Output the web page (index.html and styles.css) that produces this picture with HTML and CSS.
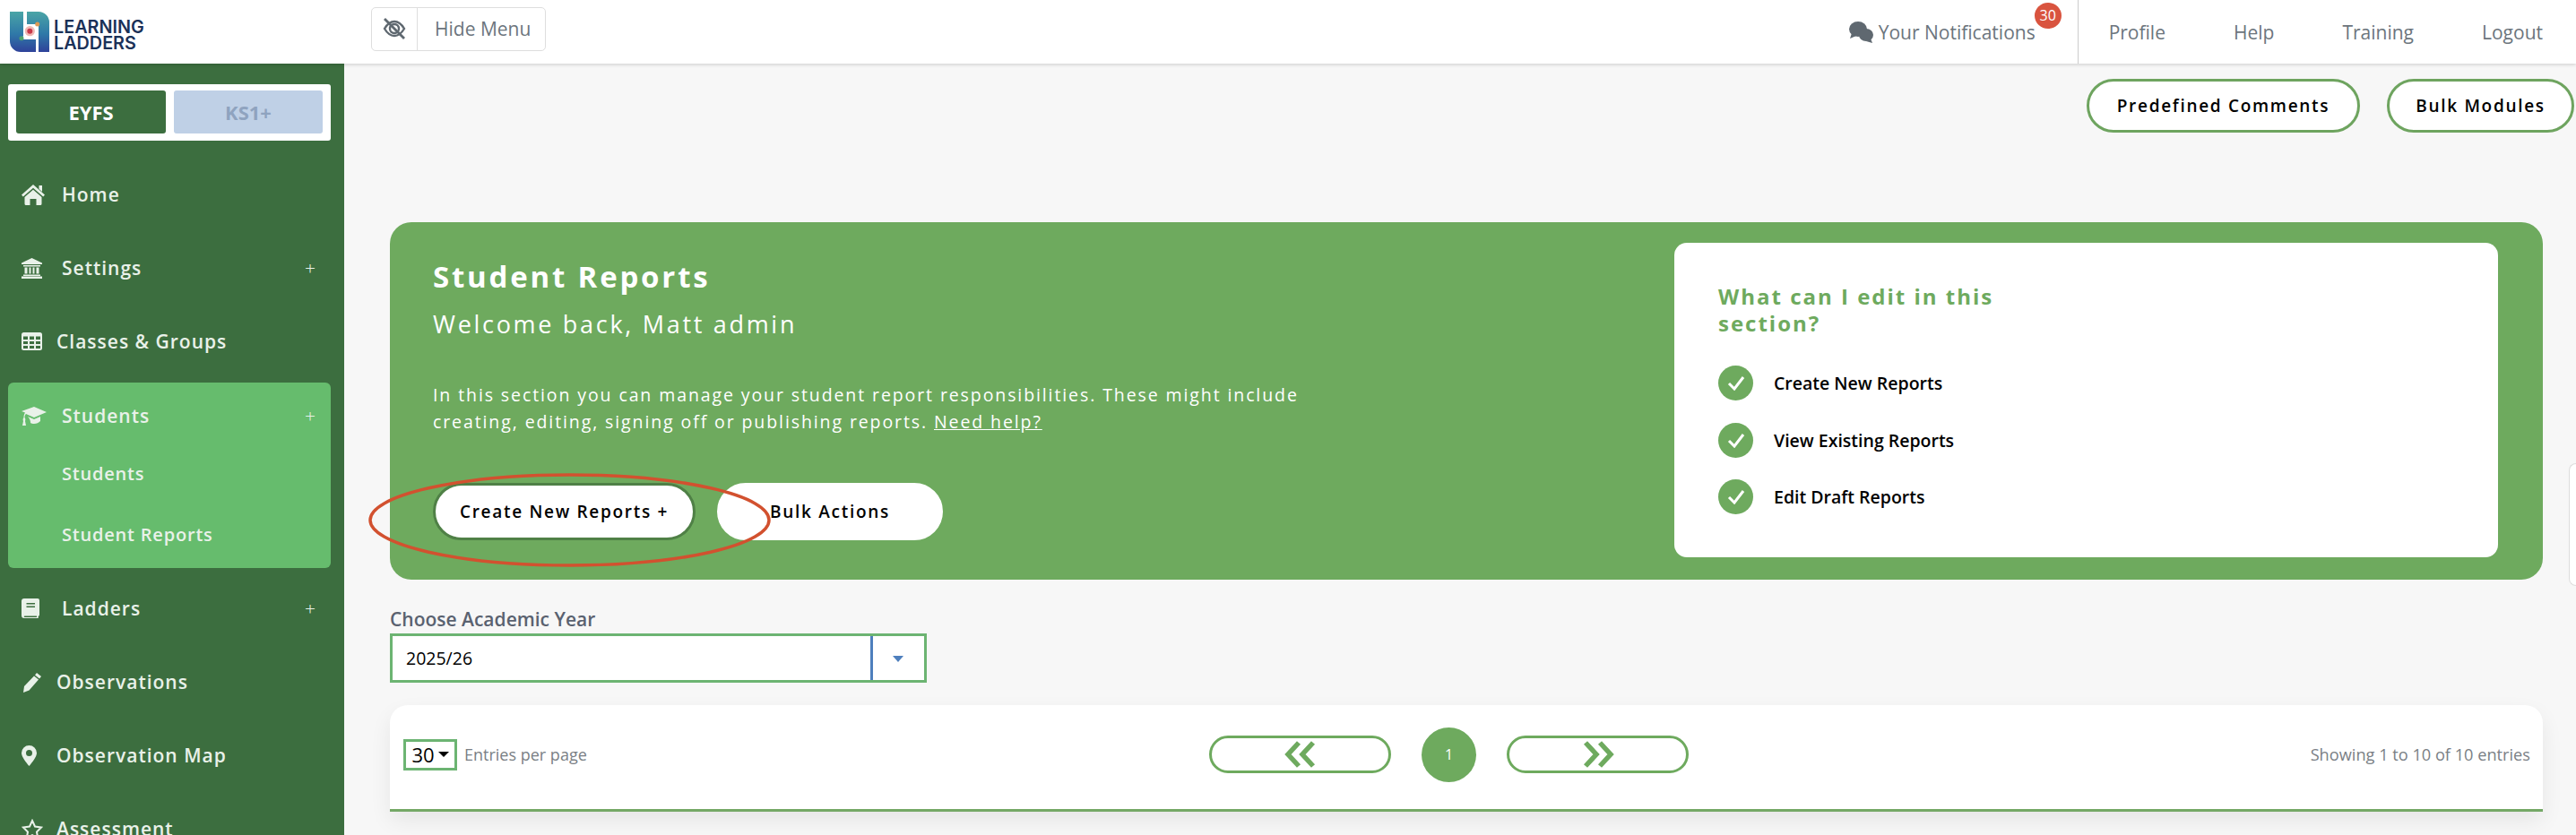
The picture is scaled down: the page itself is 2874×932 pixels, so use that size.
FILE: index.html
```html
<!DOCTYPE html>
<html lang="en">
<head>
  <meta charset="UTF-8">
  <title>Student Reports - Learning Ladders</title>
  <link rel="stylesheet" href="styles.css">
</head>
<body>
  <div class="app">
    <!-- Top bar -->
    <header class="topbar">
      <div class="brand">
        <svg class="brand-mark" viewBox="0 0 44 45">
          <defs>
            <linearGradient id="markGrad" gradientUnits="userSpaceOnUse" x1="0" y1="0" x2="0" y2="45">
              <stop offset="0" stop-color="#4aa5a6"/>
              <stop offset="0.55" stop-color="#2f79a8"/>
              <stop offset="1" stop-color="#2f429a"/>
            </linearGradient>
          </defs>
          <path fill="url(#markGrad)" d="M0 0h15v31h14v14h-17a12 12 0 0 1-12-12z"/>
          <path fill="url(#markGrad)" d="M19 0h13a12 12 0 0 1 12 12v33h-12v-31h-13z"/>
          <path d="M13 30l18-16" stroke="#fff" stroke-width="1.500"/>
          <circle cx="22.300" cy="21.700" r="5.600" fill="#f0b9b5"/>
          <circle cx="22.300" cy="21.700" r="3" fill="#c8384a"/>
          <circle cx="13" cy="29.700" r="2.500" fill="#4da36c"/>
          <circle cx="30.700" cy="14" r="2.500" fill="#dd9a54"/>
        </svg>
        <div class="brand-name">LEARNING<br>LADDERS</div>
      </div>
      <div class="hide-menu">
        <span class="hide-menu-icon">
          <svg viewBox="0 0 26 26" width="26" height="26" fill="none" stroke="#5f6870" stroke-width="2.400">
            <path d="M2 13c3-5 7-8 11-8s8 3 11 8c-3 5-7 8-11 8s-8-3-11-8z"/>
            <circle cx="13" cy="13" r="5"/>
            <path d="M2 2l22 22" stroke-width="2.800"/>
          </svg>
        </span>
        <span class="hide-menu-text">Hide Menu</span>
      </div>
      <div class="notifications">
        <svg class="notifications-icon" viewBox="0 0 27 24" width="27" height="24" fill="#5f6870">
          <ellipse cx="10" cy="8.500" rx="10" ry="8.500"/>
          <path d="M3 13l-2 6 7-3z"/>
          <ellipse cx="19" cy="15" rx="8" ry="7"/>
          <path d="M24 19l2 5-7-2z"/>
        </svg>
        <span>Your Notifications</span>
        <span class="badge">30</span>
      </div>
      <nav class="topnav">
        <a>Profile</a>
        <a>Help</a>
        <a>Training</a>
        <a>Logout</a>
      </nav>
    </header>

    <!-- Sidebar -->
    <aside class="sidebar">
      <div class="stage-switch">
        <div class="stage stage-active">EYFS</div>
        <div class="stage stage-off">KS1+</div>
      </div>
      <div class="nav-link">
        <svg class="nav-icon" viewBox="0 0 26 23" width="26" height="23" fill="currentColor"><path d="M13 0l13 11.500-1.800 2.100-11.200-9.800-11.200 9.800-1.800-2.100z"/><path d="M19.500 1h3.500v7l-3.500-3z"/><path d="M13 5.800l9.500 8.200v7.500a1.500 1.500 0 0 1-1.500 1.500h-4.500v-7h-7v7h-4.500a1.500 1.500 0 0 1-1.500-1.500v-7.500z"/></svg>
        <span>Home</span>
      </div>
      <div class="nav-link">
        <svg class="nav-icon" viewBox="0 0 23 23" width="23" height="23" fill="currentColor"><path d="M11.500 0l11.500 5.500v1.500h-23v-1.500zM2 8h19v1.500h-19zM3.500 10.500h3v7h-3zM8.500 10.500h2v7h-2zM12.500 10.500h2v7h-2zM16.500 10.500h3v7h-3zM2 18.500h19v1.500h-19zM0 20.500h23v2.500h-23z"/></svg>
        <span>Settings</span>
        <span class="nav-plus">+</span>
      </div>
      <div class="nav-link nav-link-tight">
        <svg class="nav-icon" viewBox="0 0 23 20" width="23" height="20" fill="currentColor"><path fill-rule="evenodd" d="M2.500 0h18a2.500 2.500 0 0 1 2.500 2.500v15a2.500 2.500 0 0 1-2.500 2.500h-18a2.500 2.500 0 0 1-2.500-2.500v-15a2.500 2.500 0 0 1 2.500-2.500zM2 4.500v3.500h5v-3.500zM9 4.500v3.500h5v-3.500zM16 4.500v3.500h5v-3.500zM2 10v3h5v-3zM9 10v3h5v-3zM16 10v3h5v-3zM2 15v3h5v-3zM9 15v3h5v-3zM16 15v3h5v-3z"/></svg>
        <span>Classes &amp; Groups</span>
      </div>
      <div class="nav-panel">
        <div class="nav-link nav-link-head">
          <svg class="nav-icon" viewBox="0 0 28 21" width="28" height="21" fill="currentColor"><path d="M14 0l14 6-14 6-9-4c-1 1-1.500 2-1.500 4 1 1 1 3 .5 4l1 5h-4l1-5c-.6-1-.5-3 .5-4 0-2.500.5-4 1.500-5.500l-4-1.500z"/><path d="M7 11l7 3 7-3v5c-2 2-4 3-7 3-1.500 0-3-.3-4-1 0-3-1-5-3-7z"/></svg>
          <span>Students</span>
          <span class="nav-plus">+</span>
        </div>
        <div class="nav-sub">Students</div>
        <div class="nav-sub">Student Reports</div>
      </div>
      <div class="nav-link">
        <svg class="nav-icon" viewBox="0 0 20 23" width="20" height="23" fill="currentColor"><path fill-rule="evenodd" d="M3 0h15a2 2 0 0 1 2 2v16c0 1-.5 1.500-1.200 1.800-.2.700-.2 1.400 0 2.200h-15.800a3 3 0 0 1-3-3v-16a3 3 0 0 1 3-3zM5.500 5v1.500h9.500v-1.500zM5.500 8.500v1.500h9.500v-1.500zM3.500 19.500c-1 0-1 1.500 0 1.500h13.500v-1.500z"/></svg>
        <span>Ladders</span>
        <span class="nav-plus">+</span>
      </div>
      <div class="nav-link nav-link-tight">
        <svg class="nav-icon" viewBox="0 0 23 23" width="23" height="23" fill="currentColor"><path d="M17 1l5 4-2 2.500-5-4zM14 4.500l5 4-10.500 12-6.500 2.500 1-7z"/></svg>
        <span>Observations</span>
      </div>
      <div class="nav-link nav-link-tight">
        <svg class="nav-icon" viewBox="0 0 17 23" width="17" height="23" fill="currentColor"><path fill-rule="evenodd" d="M8.500 0a8.500 8.500 0 0 1 8.500 8.500c0 4-5 10.500-8.500 14.500-3.500-4-8.500-10.500-8.500-14.500a8.500 8.500 0 0 1 8.500-8.500zM8.500 5a3.500 3.500 0 1 0 0 7 3.500 3.500 0 0 0 0-7z"/></svg>
        <span>Observation Map</span>
      </div>
      <div class="nav-link nav-link-tight">
        <svg class="nav-icon" viewBox="0 0 24 23" width="24" height="23" fill="none" stroke="currentColor" stroke-width="2"><path d="M12 2l3 6.500 7 1-5 5 1.200 7-6.200-3.400-6.200 3.400 1.200-7-5-5 7-1z"/></svg>
        <span>Assessment</span>
      </div>
    </aside>

    <!-- Main content -->
    <main class="content">
      <div class="page-actions">
        <button class="pill pill-outline">Predefined Comments</button>
        <button class="pill pill-outline">Bulk Modules</button>
      </div>

      <section class="hero">
        <div class="hero-left">
          <h1>Student Reports</h1>
          <h2>Welcome back, Matt admin</h2>
          <p>In this section you can manage your student report responsibilities. These might include creating, editing, signing off or publishing reports. <u>Need help?</u></p>
          <div class="hero-buttons">
            <button class="pill pill-create">Create New Reports +</button>
            <button class="pill pill-plain">Bulk Actions</button>
          </div>
        </div>
        <div class="hero-card">
          <h3>What can I edit in this section?</h3>
          <ul>
            <li><span class="tick"><svg viewBox="0 0 20 17" width="20" height="17" fill="none" stroke="#fff" stroke-width="3"><path d="M2 9l6 6 10-13"/></svg></span>Create New Reports</li>
            <li><span class="tick"><svg viewBox="0 0 20 17" width="20" height="17" fill="none" stroke="#fff" stroke-width="3"><path d="M2 9l6 6 10-13"/></svg></span>View Existing Reports</li>
            <li><span class="tick"><svg viewBox="0 0 20 17" width="20" height="17" fill="none" stroke="#fff" stroke-width="3"><path d="M2 9l6 6 10-13"/></svg></span>Edit Draft Reports</li>
          </ul>
        </div>
        <!-- red hand-drawn ring over the button -->
        <svg class="ring" viewBox="0 0 449 105" width="449" height="105" fill="none">
          <ellipse cx="224.500" cy="52.500" rx="222.500" ry="50.500" stroke="#d2512f" stroke-width="3.500"/>
        </svg>
      </section>

      <div class="year-filter">
        <label>Choose Academic Year</label>
        <div class="year-select">
          <span class="year-value">2025/26</span>
          <span class="year-arrow"></span>
        </div>
      </div>

      <section class="table-card">
        <div class="entries">
          <span class="entries-select">30<span class="entries-caret"></span></span>
          <span>Entries per page</span>
        </div>
        <div class="pager">
          <span class="pager-btn">
            <svg viewBox="0 0 38 30" width="38" height="30" fill="none" stroke="#6eaa5e" stroke-width="5.500"><path d="M17 2l-12 13 12 13M33 2l-12 13 12 13"/></svg>
          </span>
          <span class="pager-num">1</span>
          <span class="pager-btn">
            <svg viewBox="0 0 38 30" width="38" height="30" fill="none" stroke="#6eaa5e" stroke-width="5.500"><path d="M5 2l12 13-12 13M21 2l12 13-12 13"/></svg>
          </span>
        </div>
        <div class="showing">Showing 1 to 10 of 10 entries</div>
      </section>

      <div class="side-tab"></div>
    </main>
  </div>
</body>
</html>
```

FILE: styles.css
```css
* {
  box-sizing: border-box;
}

body {
  margin: 0;
  height: 932px;
  overflow: hidden;
  font-family: "Open Sans", sans-serif;
  background: #f7f7f7;
}

.app {
  display: grid;
  grid-template-columns: 384px 1fr;
  grid-template-rows: 71px 861px;
}

/* Top bar */
.topbar {
  grid-column: 1 / 3;
  display: flex;
  align-items: center;
  background: #fff;
  box-shadow: 0 1px 4px rgba(0, 0, 0, 0.18);
  position: relative;
  z-index: 2;
  color: #6c757d;
  font-size: 21px;
}

.brand {
  display: flex;
  align-items: center;
  gap: 5px;
  width: 414px;
  padding-left: 11px;
}

.brand-mark {
  width: 44px;
  height: 45px;
}

.brand-name {
  font-family: Inter, sans-serif;
  font-weight: 600;
  font-size: 19.800px;
  line-height: 18px;
  color: #1b3158;
  margin-top: 6px;
}

.hide-menu {
  display: flex;
  height: 49px;
  width: 195px;
  border: 1px solid #dedede;
  border-radius: 5px;
  margin-top: -7px;
}

.hide-menu-icon {
  width: 51px;
  display: flex;
  align-items: center;
  justify-content: center;
  border-right: 1px solid #dedede;
}

.hide-menu-text {
  padding-left: 19px;
  line-height: 47px;
}

.notifications {
  margin-left: auto;
  display: flex;
  align-items: center;
  gap: 6px;
  position: relative;
  padding-right: 47px;
}

.badge {
  position: absolute;
  right: 18px;
  top: -19px;
  width: 30px;
  height: 29px;
  border-radius: 50%;
  background: #d9543f;
  color: #fff;
  font-size: 16px;
  line-height: 29px;
  text-align: center;
}

.topnav {
  display: flex;
  align-items: center;
  gap: 76px;
  height: 71px;
  padding: 0 37px 0 34px;
  border-left: 1px solid #ccc;
}

/* Sidebar */
.sidebar {
  background: #3c6e3f;
  padding: 23px 15px 0 9px;
  overflow: hidden;
  color: #e9f1e9;
  font-size: 21px;
  font-weight: 600;
  letter-spacing: 1px;
}

.stage-switch {
  display: grid;
  grid-template-columns: 167px 166px;
  gap: 9px;
  padding: 7px 9px 8px;
  background: #fff;
  border-radius: 3px;
  margin-bottom: 19px;
}

.stage {
  height: 48px;
  line-height: 48px;
  text-align: center;
  border-radius: 3px;
  font-size: 22px;
  font-weight: 700;
  letter-spacing: 0;
}

.stage-active {
  background: #3c6e3f;
  color: #fff;
}

.stage-off {
  background: #bfd0e6;
  color: #8fa3bf;
}

.nav-link {
  display: flex;
  align-items: center;
  height: 82px;
  padding: 0 15px;
  position: relative;
}

.nav-icon {
  flex: none;
  margin-right: auto;
}

.nav-link span:first-of-type {
  position: absolute;
  left: 60px;
}

.nav-link-tight span:first-of-type {
  left: 54px;
}

.nav-plus {
  font-weight: 300;
  font-size: 21px;
  letter-spacing: 0;
  margin-right: 2px;
}

.nav-panel {
  background: #66bc6d;
  border-radius: 6px;
  margin: 5px 0 4px;
  padding: 3px 0 6px;
}

.nav-link-head {
  height: 68px;
}

.nav-sub {
  height: 62px;
  line-height: 62px;
  padding-left: 60px;
  font-size: 20px;
  letter-spacing: 0.8px;
}

.nav-sub + .nav-sub {
  margin-top: 6px;
}

/* Main */
.content {
  padding: 17px 37px 0 51px;
  position: relative;
}

.page-actions {
  display: flex;
  justify-content: flex-end;
  gap: 30px;
  margin-right: -35px;
  margin-bottom: 100px;
}

.pill {
  height: 60px;
  border-radius: 32px;
  background: #fff;
  border: 3px solid #6ea45f;
  font-family: "Open Sans", sans-serif;
  font-size: 19px;
  font-weight: 600;
  letter-spacing: 1.700px;
  color: #000;
}

.pill-outline:first-child {
  width: 305px;
}

.pill-outline {
  width: 209px;
}

.hero {
  position: relative;
  display: flex;
  justify-content: space-between;
  height: 399px;
  background: #6eaa5e;
  border-radius: 24px;
  padding: 23px 50px 25px 48px;
  color: #fff;
}

.hero-left {
  width: 1020px;
}

.hero-left h1 {
  margin: 16px 0 0;
  font-size: 33px;
  line-height: 44px;
  font-weight: 700;
  letter-spacing: 2.800px;
}

.hero-left h2 {
  margin: 13px 0 0;
  font-size: 27px;
  line-height: 36px;
  font-weight: 500;
  letter-spacing: 2.700px;
}

.hero-left p {
  width: 1000px;
  margin: 46px 0 0;
  font-size: 19.500px;
  line-height: 29.500px;
  letter-spacing: 1.900px;
}

.hero-buttons {
  display: flex;
  gap: 24px;
  margin-top: 54px;
}

.pill-create,
.pill-plain {
  height: 64px;
}

.pill-create {
  width: 293px;
  border-color: #4f8046;
}

.pill-plain {
  width: 252px;
  border-color: #fff;
}

.hero-card {
  width: 919px;
  background: #fff;
  border-radius: 14px;
  padding: 45px 49px 0;
  color: #000;
}

.hero-card h3 {
  width: 400px;
  margin: 0 0 32px;
  font-size: 24px;
  line-height: 30px;
  font-weight: 700;
  letter-spacing: 2px;
  color: #6eaa5e;
}

.hero-card ul {
  list-style: none;
  margin: 0;
  padding: 0;
}

.hero-card li {
  display: flex;
  align-items: center;
  gap: 23px;
  height: 39px;
  margin-bottom: 24.500px;
  font-size: 19.500px;
  font-weight: 600;
}

.tick {
  width: 39px;
  height: 39px;
  border-radius: 50%;
  background: #6eaa5e;
  display: flex;
  align-items: center;
  justify-content: center;
}

.ring {
  position: absolute;
  left: -24px;
  top: 280px;
  pointer-events: none;
}

/* Year filter */
.year-filter {
  margin-top: 29px;
}

.year-filter label {
  display: block;
  font-size: 21px;
  line-height: 31px;
  font-weight: 600;
  color: #5a6270;
}

.year-select {
  display: flex;
  width: 599px;
  height: 55px;
  background: #fff;
  border: 3px solid #6cb472;
}

.year-value {
  flex: 1;
  padding-left: 15px;
  line-height: 49px;
  font-size: 19.500px;
  font-weight: 500;
  color: #000;
  border-right: 3px solid #4e7fbd;
}

.year-arrow {
  width: 57px;
  position: relative;
}

.year-arrow::after {
  content: "";
  position: absolute;
  left: 22px;
  top: 22px;
  border: 6px solid transparent;
  border-top: 7px solid #4e7fbd;
  border-bottom: 0;
}

/* Table card */
.table-card {
  display: grid;
  grid-template-columns: 1fr auto 1fr;
  align-items: center;
  height: 119px;
  margin-top: 25px;
  padding: 0 14px 6px 15px;
  background: #fff;
  border-bottom: 3px solid #74a866;
  border-radius: 20px 20px 0 0;
  box-shadow: 0 10px 24px rgba(0, 0, 0, 0.07);
  font-size: 18px;
  color: #7a7f85;
}

.entries {
  display: flex;
  align-items: center;
  gap: 8px;
}

.entries-select {
  display: flex;
  align-items: center;
  justify-content: center;
  gap: 4px;
  width: 60px;
  height: 35px;
  border: 3px solid #6cb472;
  font-size: 22px;
  color: #000;
}

.entries-caret {
  border: 6px solid transparent;
  border-top: 6px solid #000;
  border-bottom: 0;
}

.pager {
  display: flex;
  align-items: center;
  gap: 34px;
  margin-right: 40px;
}

.pager-btn {
  display: flex;
  align-items: center;
  justify-content: center;
  width: 203px;
  height: 42px;
  border: 3px solid #6eaa5e;
  border-radius: 21px;
}

.pager-num {
  width: 61px;
  height: 61px;
  border-radius: 50%;
  background: #6eaa5e;
  color: #fff;
  font-size: 16px;
  line-height: 61px;
  text-align: center;
}

.showing {
  text-align: right;
  font-size: 18.200px;
}

.side-tab {
  position: absolute;
  right: 0;
  top: 446px;
  width: 8px;
  height: 137px;
  background: #fff;
  border: 1px solid #ddd;
  border-right: 0;
  border-radius: 8px 0 0 8px;
}
```
